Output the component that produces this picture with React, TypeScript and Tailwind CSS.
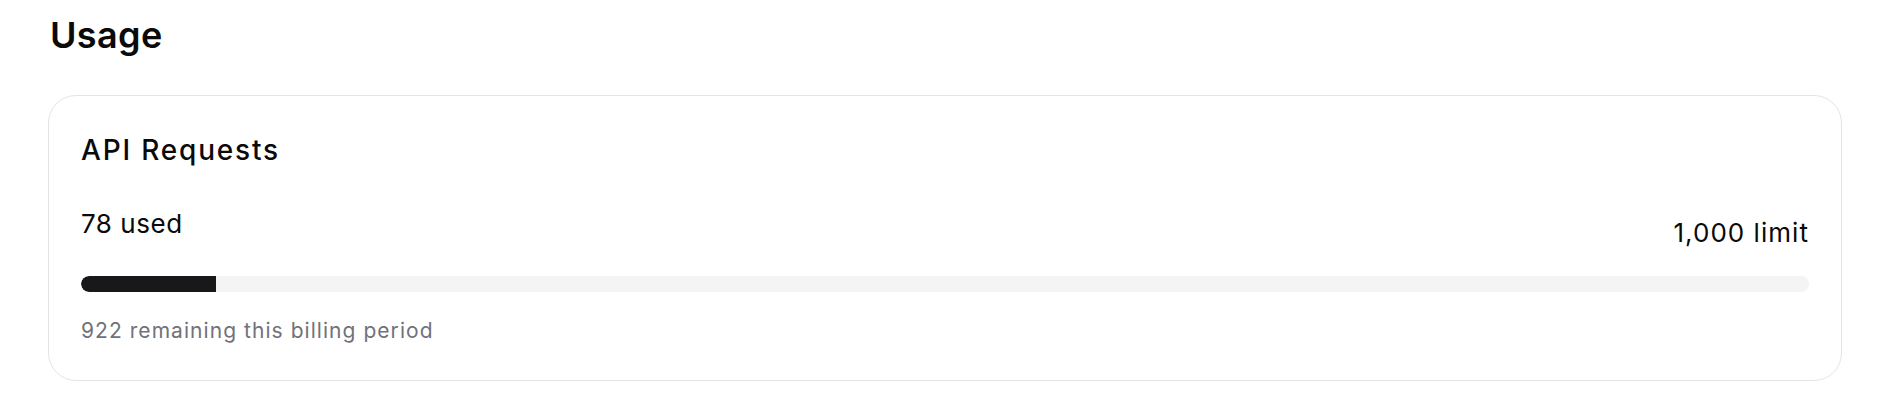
export default function App() {
  const used = 78;
  const limit = 1000;
  const pct = (used / limit) * 100;

  return (
    <main className="min-h-screen bg-white px-12 pt-[15px] text-[#0a0a0a] [font-family:Inter,'Noto_Sans',sans-serif]">
      <h1 className="pl-[2px] text-[36px] font-semibold leading-[40px] tracking-[0.01em]">Usage</h1>

      <section className="mt-10 rounded-[28px] border border-[#e4e4e7] bg-white p-8">
        <h2 className="text-[28px] font-medium leading-[44px] tracking-[0.065em]">API Requests</h2>

        <div className="mt-9 flex items-start justify-between">
          <span className="text-[26px] leading-[32px] tracking-[0.02em]">{used} used</span>
          <span className="pt-[9px] text-[26px] leading-[32px] tracking-[0.04em]">1,000 limit</span>
        </div>

        <div className="mt-[27px] h-4 w-full overflow-hidden rounded-full bg-[#f4f4f5]">
          <div className="h-full rounded-l-full bg-[#18181b]" style={{ width: `${pct}%` }} />
        </div>

        <p className="mb-[3px] mt-[25px] text-[21px] leading-[28px] tracking-[0.05em] text-[#71717a]">
          {limit - used} remaining this billing period
        </p>
      </section>
    </main>
  );
}
